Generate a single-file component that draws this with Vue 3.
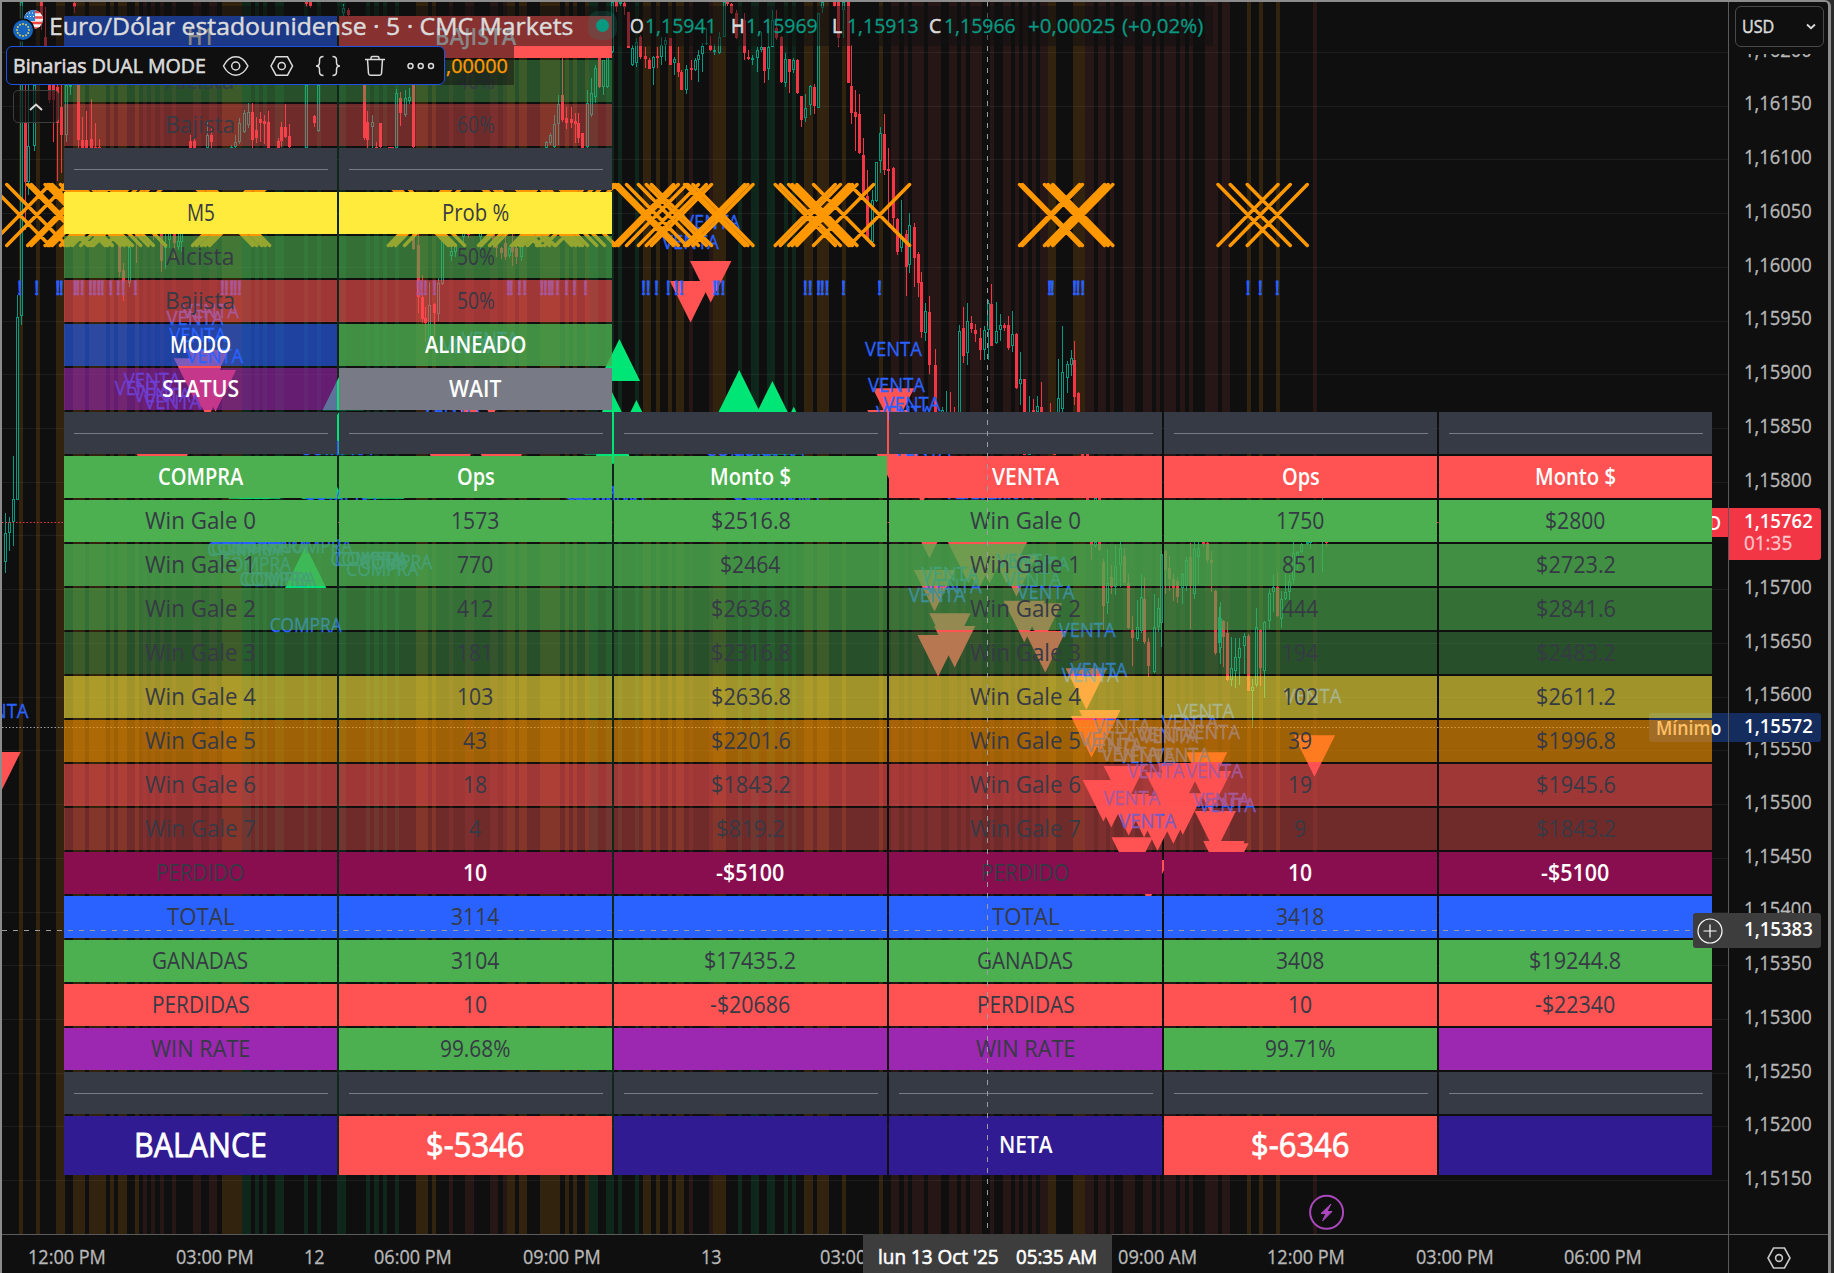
<script setup>
const ADV = {
  ' ': 301, '!': 367, $: 524, '%': 600, "'": 160, '(': 367, ')': 367, '+': 524, ',': 367, '-': 367, '.': 367, '/': 524, ':': 367, '·': 367,
  A: 590, B: 566, C: 598, D: 613, E: 536, F: 525, G: 676, H: 654, I: 278, J: 477, K: 576, L: 506, M: 709, N: 638, O: 674, P: 558, Q: 676,
  R: 582, S: 481, T: 581, U: 648, V: 587, W: 852, X: 557, Y: 570, Z: 550,
  a: 525, b: 557, c: 495, d: 557, e: 545, f: 370, g: 502, h: 546, i: 285, j: 367, k: 504, l: 295, m: 830, n: 546, o: 537, ó: 537, í: 285,
  p: 557, q: 557, r: 389, s: 405, t: 396, u: 546, v: 490, w: 744, x: 501, y: 493, z: 475
}
const textWidth = (t, size) => [...t].reduce((w, c) => w + (ADV[c] ?? 524), 0) * size / 1000

// Condenses a label to the advance widths of the chart typeface.
const vFit = {
  mounted(el, { value }) {
    const natural = el.offsetWidth
    const t = el.textContent
    if (!natural || !t) return
    const target = value || textWidth(t, parseFloat(getComputedStyle(el).fontSize))
    el.style.transformOrigin = '0 50%'
    el.style.transform = `scaleX(${target / natural})`
    el.style.marginRight = `${target - natural}px`
  }
}

const KX = 2.529
const KY = 3
const at = (ox, oy) => (x, y = 0) => [ox + x / KX, oy + y / KY]

/* background stripes: [x, width, tone] */
const stripeData = [
  [0, {
    o: '48-58 91-101 142-164 185-215 225-268 278-288 298-321 341-352 561-612 1052-1082 1093-1103 1282-1302 1313-1333 1366-1416 1429-1439 1449-1459 1479-1490',
    r: '362-372 382-392 405-415 435-445 488-508 529-549 1136-1146 1176-1199 1239-1259 1272-1282',
    g: '612-635 645-655 665-675 695-718 769-779 802-812 852-875 926-936 946-959 969-979 999-1009 1490-1512 1533-1552'
  }],
  [600, {
    g: '15-35 46-56 89-99 349-359 382-402 422-443 465-475 486-496',
    o: '109-129 142-152 172-182 192-212 286-319 516-539 549-579 612-622 706-716 1133-1153 1196-1227',
    r: '225-235 276-286 736-756 769-779 789-819 830-862 883-903 913-926 936-966 986-996 1019-1039 1050-1060 1070-1083 1093-1103 1113-1133 1227-1249 1259-1280 1290-1300 1323-1353 1373-1396 1406-1416 1426-1457 1467-1479 1490-1500 1530-1563'
  }],
  [1214, { o: '83-94 114-124 157-167', r: '20-40 250-260' }]
]
const tone = { o: '#32230f', r: '#271616', g: '#0f261a' }
const stripes = stripeData.flatMap(([ox, sets]) =>
  Object.entries(sets).flatMap(([k, s]) => s.split(' ').map(p => {
    const [a, b] = p.split('-').map(v => Math.round(ox + v / KX))
    return { x: a, w: b - a, fill: tone[k] }
  })))

const gridLines = Array.from({ length: 22 }, (_, i) => Math.round(52 + i * 53.72))

/* candles: x, body top, body bottom, high, low (u = up, d = down) */
const candleData = [
  [0, 0, `u52 6 948 6 975;d63 370 545 250 690;u72 437 545 250 585;u85 255 437 250 452;d104 6 60 6 90;d115 110 140 20 150;d125 255 300 250 310;
  d135 255 300 250 425;d145 260 370 250 542;d155 320 405 250 520;u168 255 405 250 425;u178 255 262 250 285;d188 10 20 6 40;d198 255 420 255 443;d208 420 443 350 443;
  d218 420 443 333 443;d229 417 443 297 443;d240 440 443 370 443;d251 440 443 417 443;d480 423 443 405 443;d491 423 443 415 443;u523 405 443 365 443;d533 405 425 380 443;
  u585 440 443 435 443;u595 425 440 405 443;u605 370 425 355 432;u616 340 395 330 400;u627 337 375 310 385;d638 337 420 310 443;d648 390 415 350 430;d658 358 370 335 425;
  d668 363 373 345 433;d678 367 443 333 443;d702 423 443 415 443;d711 380 423 365 440;d722 380 410 312 415;d732 408 440 373 443;u773 255 443 255 443;d775 6 12 6 20;d785 6 18 6 25;
  d795 348 370 345 380;u805 255 392 255 395;u868 24 40 12 60;d880 30 46 25 50;d920 255 415 255 420;d929 365 420 333 443;u940 367 380 345 443;d950 440 443 425 443;d962 370 440 368 443;
  d985 440 443 440 443;d992 440 443 440 443;u1002 280 443 268 443;d1012 293 338 275 378;u1023 293 345 270 350;u1035 290 302 265 312;d1045 255 440 255 443;
  u1380 425 443 422 443;u1390 405 430 400 435;u1400 373 440 345 443;u1412 313 373 285 435;d1422 285 360 160 365;d1432 353 368 320 388;d1443 358 368 320 385;d1453 363 373 340 430;
  d1463 370 413 338 430;d1473 400 443 398 443;u1484 308 440 270 443;u1495 280 345 235 350;u1505 205 290 195 308;d1515 145 260 145 265;u1525 180 262 190 285;u1536 150 262 145 264`],
  [0, 180, `u42 410 960 345 960;d302 160 275 160 290;d312 270 310 250 362;u325 200 310 190 320;d345 160 170 160 248;d387 160 163 160 180;d408 160 243 160 275;u418 195 205 160 268;
  u428 160 180 160 205;d439 160 190 160 240;u449 183 200 160 210;u459 160 185 160 215;d1045 160 208 160 210;d1056 195 350 160 400;d1066 350 418 285 430;d1076 413 430 380 487;
  u1086 375 478 307 480;d1097 372 398 370 467;u1108 308 403 295 422;u1118 160 313 160 315;u1140 213 228 200 243;u1150 195 215 190 232;u1172 160 172 160 190;d1183 160 165 160 175;
  u1213 160 170 160 208;d1248 160 195 160 205;d1255 190 205 170 232;d1266 205 220 200 237;d1276 190 230 165 240;u1286 205 228 195 235;d1296 195 217 160 257;d1306 205 230 190 253;u1317 198 230 180 243`],
  [0, 440, 'u32 178 247 48 318;u22 247 280 230 332;u12 280 365 218 400'],
  [600, 0, `u30 6 155 6 160;d40 6 20 6 35;u50 6 12 6 18;d61 10 20 6 45;d72 35 143 35 143;u82 145 195 135 198;u92 125 188 115 200;d102 110 170 105 178;d113 168 178 140 205;d123 180 207 175 208;
  u133 170 205 168 255;d145 168 173 140 205;u155 135 170 110 195;u165 120 135 110 182;d176 113 195 113 195;u186 178 188 170 225;d196 188 217 140 230;d206 215 270 210 270;u218 208 270 195 282;
  d229 205 210 180 240;u239 180 210 175 212;u249 165 180 150 245;u259 138 163 130 215;u269 128 132 85 135;d279 135 150 108 152;u289 150 157 132 165;u302 110 160 95 162;u313 6 110 6 110;d322 6 12 6 18;
  d332 12 40 10 42;d343 40 115 30 117;d363 60 160 40 180;d375 170 178 150 180;u385 175 180 165 195;u396 150 175 140 217;u406 140 150 95 155;d416 142 212 140 248;u426 140 207 75 240;u436 60 140 30 142;
  d446 85 115 30 120;d459 110 245 108 248;u469 178 248 160 262;d479 178 215 177 278;u489 180 210 175 220;d499 180 280 178 282;d509 288 360 288 380;u519 323 355 282 365;u532 258 315 255 345;
  d542 262 317 252 342;u552 40 323 38 325;u562 6 25 6 40;d593 6 18 6 22;d603 6 115 6 140;u615 6 30 6 115;d626 6 248 6 248;d636 258 338 135 372;d646 337 350 270 453;d656 343 460 282 462;d666 465 585 415 600;
  d676 588 720 510 720;u688 600 725 570 735;u699 487 603 485 605;u709 400 483 380 518;d719 403 510 342 525;d729 508 513 445 680;d740 503 655 500 695;d750 658 755 655 765;u760 715 745 600 755`],
  [600, 180, `d773 163 262 150 348;u782 135 255 100 280;d793 140 233 130 320;d803 222 310 215 350;d813 305 455 275 475;u823 393 458 370 482;d833 397 555 348 582;d846 555 710 507 710;u866 690 710 680 710;
  u876 700 710 632 710;d886 700 710 636 710;d896 700 710 680 710;u907 453 710 435 710;d917 443 527 380 548;u929 422 520 368 555;d939 430 447 408 458;d949 450 463 433 485;d960 473 510 443 540;
  u970 450 510 437 540;u980 370 450 360 540;d990 372 497 312 498;u1002 453 490 365 492;u1012 435 450 402 483;d1022 436 443 430 453;d1033 435 503 408 510;u1043 463 497 392 515;d1053 462 623 460 627;
  u1063 598 612 517 675;d1073 598 825 598 825;u1086 820 825 648 825;d1096 690 710 658 710;u1106 678 696 648 705;d1116 682 700 605 700;d1137 696 710 668 710;d1147 820 825 820 825;
  u1159 655 700 537 700;u1169 577 688 438 700;u1180 552 595 543 640;u1190 533 555 510 588;d1200 540 650 483 675;d1210 638 780 635 780;d1220 822 830 822 830;d1231 822 965 822 970;u1253 955 965 955 965;d1263 950 965 950 965`],
  [600, 480, `d1243 180 195 180 240;u1253 186 197 180 205;d1263 180 210 180 212;d1273 247 377 237 450;u1283 308 370 207 403;d1293 292 320 255 342;u1303 258 320 195 345;u1316 205 255 180 320;
  d1326 227 310 205 315;d1336 310 443 282 447;d1346 450 473 407 558;u1357 440 478 360 483;u1367 350 453 282 460;d1377 358 487 290 493;d1387 487 557 475 590;u1400 440 577 342 580;u1410 383 440 355 457;
  u1420 222 430 210 502;d1430 213 270 210 342;d1440 265 298 228 332;d1450 298 325 282 362;d1460 303 350 292 370;u1473 283 325 280 372;u1483 240 318 230 333;d1493 232 318 190 447;u1503 208 343 185 358;
  u1513 205 230 172 313;d1524 186 192 180 200;d1534 190 240 182 250;d1544 240 250 213 335;d1555 332 518 330 525;u1565 410 490 380 520`],
  [1214, 480, `u14 413 505 367 552;d24 422 470 420 560;d34 460 600 427 603;u44 563 600 470 617;u54 532 573 475 623;u64 505 533 475 615;u77 468 498 460 583;d87 468 632 462 633;u97 620 633 597 740;
  u107 440 615 385 622;d117 450 563 447 617;u127 425 572 423 653;u138 340 422 327 447;u148 322 335 285 395;d160 320 408 277 410;u170 358 417 332 443;u180 335 358 280 360;u190 303 335 285 365;
  u201 220 300 186 312;u211 215 255 213 270;u221 192 217 188 220;u234 186 192 183 195;u244 184 186 180 208;u274 60 65 50 275;d284 180 190 180 197`]
]
const candles = candleData.flatMap(([ox, oy, s]) => s.split(';').map(c => {
  const t = c.trim()
  const [x, a, b, h, l] = t.slice(1).split(' ').map(Number)
  const px = Math.round(ox + x / KX)
  return { up: t[0] === 'u', x: px, top: oy + a / KY, h: Math.max(1, (b - a) / KY), hi: oy + h / KY, lo: oy + l / KY }
}))

/* downward and upward arrows: centre x, top y */
const downData = [
  [0, 180, '492,535 527,510 508,560 545,570 525,590 398,822 423,822 1139,822 1268,822 1187,620 1243,590'],
  [600, 180, '280,243 229,303 742,625 728,690 729,733 752,822 774,830 812,840 815,845'],
  [600, 480, `833,110 932,186 950,190 985,186 1028,186 960,197 846,270 885,400 897,438 855,465 1053,225 1073,362 1116,370 1126,453 1230,565 1264,690 1243,708
   1326,858 1273,900 1293,918 1337,942 1376,948 1410,988 1450,967 1474,940 1431,877 1475,850 1463,850 1544,873 1534,817 1346,1072 1556,993 1578,1083 1588,1090 1387,1140`],
  [1214, 480, '254,766'],
  [0, 440, '0,936']
]
const upData = [
  [600, 180, '49,477 352,570 436,603 92,660 490,680 30,635 10,697 32,725 425,697 460,697'],
  [0, 180, '868,565 856,697 1531,697'],
  [0, 440, '630,50 657,50 815,50 970,50 735,180 711,180 773,318']
]
const poly = (data, dir) => data.flatMap(([ox, oy, s]) => s.trim().split(/\s+/).map(p => {
  const [x, y] = p.split(',').map(Number)
  const [cx, cy] = at(ox, oy)(x, y)
  return dir > 0
    ? `${cx - 20.7},${cy} ${cx + 20.7},${cy} ${cx},${cy + 41.5}`
    : `${cx - 20.7},${cy + 42} ${cx + 20.7},${cy + 42} ${cx},${cy}`
}))
const downs = poly(downData, 1)
const ups = poly(upData, -1)

/* signal captions: centre x, baseline */
const ventaData = [
  [600, 180, '282,147 229,207 742,527 750,637 789,693 770,720 814,827 941,958 980,958 1025,958'],
  [0, 180, '532,414 493,434 500,487 543,548 385,622 362,645 410,665 437,687 1240,497 1190,520 1140,697'],
  [600, 480, '885,302 893,340 853,365 1075,265 1115,273 1095,318 1128,357 1232,470 1262,592 1240,607 1532,715 1321,760 1492,747 1547,777 1430,782 1441,790 1286,799 1300,817 1340,843 1383,850 1471,845 1406,895 1554,895 1345,975 1385,1043 1572,980 1587,995'],
  [1214, 480, '250,668'],
  [0, 440, '0,835']
]
const compraData = [
  [0, 440, '615,347 625,345 640,340 690,340 800,338 645,392 697,437 708,437 927,377 940,377 1002,388 967,407 773,577 860,180 850,45 1520,180 620,312'],
  [600, 180, '358,827 425,827 425,960 463,960 20,960']
]
const caps = (data, text) => data.flatMap(([ox, oy, s]) => s.split(' ').map(p => {
  const [x, y] = at(ox, oy)(...p.split(',').map(Number))
  return { x, y, text, len: textWidth(text, 19.4) }
}))
const captions = [...caps(ventaData, 'VENTA'), ...caps(compraData, 'COMPRA')]

const signalData = [
  [0, '50 93 146 155 190 197 208 229 239 250 259 280 299 312 343 563 573 586 595 606 1058 1066 1076 1099 1286 1293 1314 1327 1370 1380 1390 1397 1410 1433 1453 1481'],
  [600, '110 122 143 173 193 206 290 298 311 519 532 553 562 574 616 707 1137 1144 1200 1209 1221'],
  [1214, '86 117 160']
]
const signals = signalData.flatMap(([ox, s]) => s.split(' ').map(v => ox + v / KX))
const crossPath = signals.map(x => `M${x - 30} 184.500L${x + 30} 245.500M${x + 30} 184.500L${x - 30} 245.500`).join('')

/* table */
const G = '76,175,80', R = '255,82,82', Y = '255,235,59', O = '255,152,0', B = '41,98,255', P = '156,39,176'
const c = (t, rgb, a = 1, cls = '') => ({ t, bg: `rgba(${rgb},${a})`, cls })
const sep = n => Array.from({ length: n }, () => ({ sep: true, bg: '#363a45' }))
const six = (l, v, rgb, a) => [l, v[0], v[1], l, v[2], v[3]].map(t => c(t, rgb, a))
const M = '136,14,79', I = '49,27,146'
const rows = [
  [c('H1', B, 1, 'w'), c('BAJISTA', R, 1, 'w')],
  [c('Alcista', G, 0.4), c('40%', G, 0.4)],
  [c('Bajista', R, 0.4), c('60%', R, 0.4)],
  sep(2),
  [c('M5', Y), c('Prob %', Y)],
  [c('Alcista', G, 0.6), c('50%', G, 0.6)],
  [c('Bajista', R, 0.6), c('50%', R, 0.6)],
  [c('MODO', B, 0.6, 'w'), c('ALINEADO', G, 0.8, 'w')],
  [c('STATUS', P, 0.6, 'w'), c('WAIT', '120,123,134', 1, 'w')],
  sep(6),
  [c('COMPRA', G, 1, 'w'), c('Ops', G, 1, 'w'), c('Monto $', G, 1, 'w'), c('VENTA', R, 1, 'w'), c('Ops', R, 1, 'w'), c('Monto $', R, 1, 'w')],
  six('Win Gale 0', ['1573', '$2516.8', '1750', '$2800'], G, 1),
  six('Win Gale 1', ['770', '$2464', '851', '$2723.2'], G, 0.8),
  six('Win Gale 2', ['412', '$2636.8', '444', '$2841.6'], G, 0.6),
  six('Win Gale 3', ['181', '$2316.8', '194', '$2483.2'], G, 0.4),
  six('Win Gale 4', ['103', '$2636.8', '102', '$2611.2'], Y, 0.6),
  six('Win Gale 5', ['43', '$2201.6', '39', '$1996.8'], O, 0.6),
  six('Win Gale 6', ['18', '$1843.2', '19', '$1945.6'], R, 0.6),
  six('Win Gale 7', ['4', '$819.2', '9', '$1843.2'], R, 0.4),
  [c('PERDIDO', M), c('10', M, 1, 'w'), c('-$5100', M, 1, 'w'), c('PERDIDO', M), c('10', M, 1, 'w'), c('-$5100', M, 1, 'w')],
  six('TOTAL', ['3114', '', '3418', ''], B, 1),
  six('GANADAS', ['3104', '$17435.2', '3408', '$19244.8'], G, 1),
  six('PERDIDAS', ['10', '-$20686', '10', '-$22340'], R, 1),
  [c('WIN RATE', P), c('99.68%', G), c('', P), c('WIN RATE', P), c('99.71%', G), c('', P)],
  sep(6),
  [c('BALANCE', I, 1, 'w big'), c('$-5346', R, 1, 'w big'), c('', I), c('NETA', I, 1, 'w'), c('$-6346', R, 1, 'w big'), c('', I)]
]

const prices = Array.from({ length: 22 }, (_, i) => '1,' + (16200 - i * 50))
const ohlc = [['O', '1,15941', 630], ['H', '1,15969', 731], ['L', '1,15913', 832], ['C', '1,15966', 929]]
const times = [
  ['12:00 PM', 66.5], ['03:00 PM', 214.6], ['12', 314], ['06:00 PM', 413], ['09:00 PM', 562], ['13', 711],
  ['03:00 AM', 859], ['09:00 AM', 1157], ['12:00 PM', 1306], ['03:00 PM', 1454.6], ['06:00 PM', 1603]
]
const stars = Array.from({ length: 12 }, (_, i) => [23 + 6 * Math.sin(i * Math.PI / 6), 31 - 6 * Math.cos(i * Math.PI / 6)])
</script>

<template>
  <div class="window">
    <main class="plot">
      <svg class="canvas" width="1728" height="1234" viewBox="0 0 1728 1234">
        <g shape-rendering="crispEdges">
          <rect v-for="(s, i) in stripes" :key="'s' + i" :x="s.x" y="2" :width="s.w" height="1232" :fill="s.fill" />
          <rect v-for="y in gridLines" :key="'g' + y" x="2" :y="y" width="1726" height="1" fill="#fff" fill-opacity=".06" />
          <g v-for="(k, i) in candles" :key="'c' + i">
            <template v-if="k.up">
              <rect :x="k.x" :y="k.hi" width="1" :height="Math.max(0, k.top - k.hi)" fill="#089981" />
              <rect :x="k.x" :y="k.top + k.h" width="1" :height="Math.max(0, k.lo - k.top - k.h)" fill="#089981" />
              <rect :x="k.x - 0.5" :y="k.top + 0.5" width="2" :height="Math.max(0.5, k.h - 1)" fill="none" stroke="#089981" />
            </template>
            <template v-else>
              <rect :x="k.x" :y="k.hi" width="1" :height="k.lo - k.hi" fill="#f23645" />
              <rect :x="k.x - 1" :y="k.top" width="3" :height="k.h" fill="#f23645" />
            </template>
          </g>
        </g>
        <polygon v-for="(p, i) in downs" :key="'d' + i" :points="p" fill="#ff5252" />
        <polygon v-for="(p, i) in ups" :key="'u' + i" :points="p" fill="#00e676" />
        <g class="caption">
          <text v-for="(t, i) in captions" :key="'t' + i" :x="t.x" :y="t.y" :textLength="t.len" lengthAdjust="spacingAndGlyphs">{{ t.text }}</text>
          <text v-for="(x, i) in signals" :key="'e' + i" :x="x" y="294.500" class="mark">!</text>
        </g>
        <path :d="crossPath" stroke="#ff9800" stroke-width="3.500" stroke-linecap="round" fill="none" />
        <path d="M2 522.5H1728" stroke="#f23645" stroke-dasharray="1.5 2" />
        <path d="M2 727.5H1728" stroke="#a0a0a0" stroke-dasharray="1.5 2" />
        <g fill="none" stroke="#ab47bc" stroke-width="2">
          <circle cx="1326.6" cy="1212.3" r="16.5" fill="#0f0f0f" />
          <path d="M1331 1204l-10 9.500h5l-3.500 7.500 9.500-9.500h-5z" fill="#ab47bc" stroke-width="1" stroke-linejoin="round" />
        </g>
      </svg>

      <div class="tag last"><span v-fit="0">EURUSD</span></div>
      <div class="tag low"><span v-fit="65">Mínimo</span></div>

      <div class="board">
        <div v-for="(r, i) in rows" :key="i" class="row" :class="{ tall: i === rows.length - 1 }">
          <div v-for="(cell, j) in r" :key="j" class="cell" :class="cell.cls" :style="{ background: cell.bg }">
            <i v-if="cell.sep" class="rule"></i>
            <span v-else v-fit="0">{{ cell.t }}</span>
          </div>
        </div>
      </div>

      <svg class="canvas" width="1728" height="1234" viewBox="0 0 1728 1234">
        <path d="M987.500 2V1234M2 930.500H1694" stroke="#9c9c9c" stroke-dasharray="5 6" />
      </svg>

      <div class="veil one"></div>
      <div class="veil two"></div>
      <header class="legend">
        <svg width="62" height="60" viewBox="0 0 62 60" class="flags">
          <defs><clipPath id="us"><circle cx="33.500" cy="20.500" r="9.500" /></clipPath></defs>
          <g clip-path="url(#us)">
            <rect x="23" y="10" width="22" height="22" fill="#f0f0f0" />
            <path d="M23 13h22M23 18.500h22M23 24h22M23 29.500h22" stroke="#ef4444" stroke-width="2.700" />
            <rect x="23" y="10" width="12" height="12" fill="#2f7fd4" />
            <path d="M26 14h8M27 17.500h8" stroke="#fff" stroke-width="1" stroke-dasharray="1 2" />
          </g>
          <circle cx="23" cy="31" r="11.500" fill="#0f0f0f" />
          <circle cx="23" cy="31" r="10" fill="#1565c0" />
          <circle v-for="(s, i) in stars" :key="i" :cx="s[0]" :cy="s[1]" r=".95" fill="#e8d44d" />
        </svg>
        <span v-fit="524" class="title">Euro/Dólar estadounidense · 5 · CMC Markets</span>
        <i class="status"><b></b></i>
        <span v-for="o in ohlc" :key="o[0]" class="pair" :style="{ left: o[2] + 'px' }"><span v-fit="0" class="key">{{ o[0] }}</span><em v-fit="0">{{ o[1] }}</em></span>
        <span class="pair" :style="{ left: '1028px' }"><em v-fit="87">+0,00025</em></span>
        <span class="pair" :style="{ left: '1122px' }"><em v-fit="81">(+0,02%)</em></span>
      </header>
      <span class="value"><span v-fit="62">,00000</span></span>

      <div class="toolbar">
        <span v-fit="193">Binarias DUAL MODE</span>
        <svg width="210" height="34" viewBox="216 49 210 34" fill="none" stroke="#dbdbdb" stroke-width="1.500">
          <path d="M223.500 66c3-6 7.500-9.200 12.200-9.200s9.200 3.200 12.200 9.200c-3 6-7.500 9.200-12.200 9.200s-9.200-3.200-12.200-9.200z" />
          <circle cx="235.700" cy="66" r="4" />
          <path d="M276 56.800h11.500l5 9.200-5 9.200H276l-5-9.200z" /><circle cx="281.700" cy="66" r="3.600" />
          <path d="M323.500 56.500c-3 0-4 1-4 3.500v2.500c0 2-1 3.500-3.500 3.500 2.500 0 3.500 1.500 3.500 3.500V72c0 2.500 1 3.500 4 3.500M332.500 56.500c3 0 4 1 4 3.500v2.500c0 2 1 3.500 3.500 3.500-2.500 0-3.500 1.500-3.500 3.500V72c0 2.500-1 3.500-4 3.500" />
          <path d="M365 59.500h20M371 59.500v-1.500q0-1.500 1.500-1.500h5q1.500 0 1.500 1.500v1.500M367.500 59.500l1 14q.2 1.800 2 1.800h9q1.800 0 2-1.800l1-14" />
          <circle cx="410.500" cy="66" r="2.500" /><circle cx="420.700" cy="66" r="2.500" />
        </svg>
        <svg class="more" width="10" height="34" viewBox="426 49 10 34" fill="none" stroke="#dbdbdb" stroke-width="1.500"><circle cx="431" cy="66" r="2.500" /></svg>
      </div>
      <div class="collapse">
        <svg width="16" height="10" viewBox="0 0 16 10"><path d="M2 8l6-5.500L14 8" fill="none" stroke="#dbdbdb" stroke-width="2" /></svg>
      </div>
    </main>

    <aside class="prices">
      <div v-for="p in prices" :key="p" class="price"><span v-fit="0">{{ p }}</span></div>
      <div class="cover">
        <div class="currency">
          <span v-fit="0">USD</span>
          <svg width="10" height="7" viewBox="0 0 10 7"><path d="M1 1.500l4 3.700 4-3.700" fill="none" stroke="#dbdbdb" stroke-width="1.800" /></svg>
        </div>
      </div>
      <div class="badge red"><span v-fit="69">1,15762</span><small v-fit="0">01:35</small></div>
      <div class="badge blue"><span v-fit="69">1,15572</span></div>
      <div class="badge gray">
        <svg width="28" height="28" viewBox="0 0 28 28" fill="none" stroke="#fff" stroke-width="1.200"><circle cx="14" cy="14" r="12" /><path d="M14 7.500v13M7.500 14h13" /></svg>
        <span v-fit="69">1,15383</span>
      </div>
    </aside>

    <footer class="times">
      <span v-for="(t, i) in times" :key="i" class="time" :style="{ left: t[1] + 'px' }"><span v-fit="0">{{ t[0] }}</span></span>
      <div class="stamp"><span v-fit="121">lun 13 Oct '25</span><span v-fit="81">05:35 AM</span></div>
    </footer>
    <div class="corner">
      <svg width="26" height="24" viewBox="0 0 26 24" fill="none" stroke="#c8c8c8" stroke-width="1.600"><path d="M7.500 2h11l5.500 10-5.500 10h-11L2 12z" /><circle cx="13" cy="12" r="3.400" /></svg>
    </div>
    <div class="frame"></div>
  </div>
</template>

<style>
body { background: #2b2b2b; overflow: hidden; }
</style>

<style scoped>
.window { position: relative; display: grid; grid-template: 1234px 39px / 1728px 106px; width: 1834px; height: 1273px; overflow: hidden; background: #0f0f0f; font-family: "Open Sans", "Noto Sans", sans-serif; font-size: 19.4px; line-height: 1; color: #dbdbdb; white-space: nowrap; }
.window span, .window em, .window small { display: inline-block; white-space: pre; }
.plot { position: relative; overflow: hidden; }
.canvas { position: absolute; inset: 0; }
.caption { font-size: 19.400px; fill: #2962ff; text-anchor: middle; stroke: #2962ff; stroke-width: .3px; }
.caption .mark { stroke-width: .9px; }

.board { position: absolute; left: 64px; top: 16px; display: flex; flex-direction: column; gap: 2px; }
.row { display: flex; gap: 2px; height: 42px; }
.row.tall { height: 59px; }
.cell { width: 273px; display: flex; align-items: center; justify-content: center; font-size: 22.900px; color: #363a45; }
.cell.w { color: #fff; font-weight: 600; }
.cell.big { font-size: 33px; padding-bottom: 3px; box-sizing: border-box; font-weight: 400; -webkit-text-stroke: .8px #fff; }
.rule { width: 254px; height: 1px; background: #787b86; margin-top: 1px; }

.tag { position: absolute; right: 0; height: 29px; display: flex; align-items: center; padding: 0 7px; color: #fff; font-weight: 600; }
.tag.last { top: 508px; background: #f23645; }
.tag.low { top: 713px; background: #142c5e; border-radius: 3px 0 0 3px; }

.veil { position: absolute; background: rgba(15, 15, 15, .5); }
.veil.one { left: 12px; top: 6px; width: 1201px; height: 40px; }
.veil.two { left: 12px; top: 46px; width: 502px; height: 39px; }
.legend { position: absolute; left: 0; top: 0; width: 1220px; height: 52px; display: flex; align-items: center; }
.flags { position: absolute; left: 0; top: -1px; }
.title { margin-left: 49px; font-size: 24.500px; -webkit-text-stroke: .45px #dbdbdb; }
.status { position: absolute; left: 588px; top: 11px; width: 29px; height: 29px; border-radius: 10px; background: rgba(34, 150, 130, .18); display: flex; align-items: center; justify-content: center; }
.status b { width: 13px; height: 13px; border-radius: 50%; background: #089981; }
.pair { position: absolute; top: 15px; font-size: 20.500px; }
.pair .key { -webkit-text-stroke: .6px #dbdbdb; }
.pair em { font-style: normal; color: #089981; -webkit-text-stroke: .3px #089981; }
.pair .key + em { position: absolute; left: 15px; top: 0; }
.value { position: absolute; left: 446px; top: 55px; font-size: 20.500px; color: #ff9800; -webkit-text-stroke: .3px #ff9800; }

.toolbar { position: absolute; left: 6px; top: 46px; width: 439px; height: 39px; box-sizing: border-box; border: 1px solid #1e53e5; border-radius: 6px; background: #0f0f0f; display: flex; align-items: center; padding-left: 6px; font-size: 20px; -webkit-text-stroke: .6px #dbdbdb; }
.toolbar svg { margin-left: 10px; flex: none; }
.toolbar svg.more { margin-left: 0; }
.collapse { position: absolute; left: 13px; top: 90px; width: 46px; height: 33px; box-sizing: border-box; border: 1px solid #3d3d3d; border-radius: 5px; background: rgba(15, 15, 15, .65); display: flex; align-items: center; justify-content: center; }

.prices { position: relative; z-index: 1; box-sizing: border-box; border-left: 1px solid #5a5a5a; padding-top: 22.500px; background: #0f0f0f; }
.price { height: 53.740px; display: flex; align-items: center; padding-left: 15px; color: #b8b8b8; -webkit-text-stroke: .3px #b8b8b8; }
.cover { position: absolute; left: 0; top: 0; right: 0; height: 54px; box-sizing: border-box; padding: 6px 0 0 6px; background: #0f0f0f; }
.currency { width: 89px; height: 41px; box-sizing: border-box; border: 1px solid #4a4a4a; border-radius: 6px; display: flex; align-items: center; justify-content: space-between; padding: 0 7px 1px 6px; font-size: 18.500px; -webkit-text-stroke: .5px #dbdbdb; }
.badge { position: absolute; left: 0; width: 92px; box-sizing: border-box; padding-left: 15px; color: #fff; font-weight: 600; border-radius: 0 3px 3px 0; display: flex; align-items: center; }
.badge.red { top: 508px; height: 52px; background: #f23645; flex-direction: column; align-items: flex-start; justify-content: flex-start; padding-top: 3px; gap: 3px; }
.badge small { font-size: 19.400px; font-weight: 400; color: #fcc5ca; -webkit-text-stroke: .3px #fcc5ca; }
.badge.blue { top: 713px; height: 29px; background: #142c5e; padding-bottom: 3px; }
.badge.gray { left: -36px; width: 128px; padding-left: 3px; top: 913px; height: 35px; background: #3d3d3d; border-radius: 3px; gap: 20px; }
.badge.gray span { margin-top: -3px; }

.times { position: relative; border-top: 1px solid #5a5a5a; background: #0f0f0f; color: #b8b8b8; -webkit-text-stroke: .3px #b8b8b8; }
.time { position: absolute; top: 12px; width: 0; display: flex !important; justify-content: center; }
.stamp { position: absolute; left: 863px; top: -1px; width: 249px; height: 40px; box-sizing: border-box; background: #3d3d3d; color: #fff; -webkit-text-stroke: .6px #fff; display: flex; align-items: center; justify-content: space-between; padding: 5px 15px 0; }
.corner { border-top: 1px solid #5a5a5a; border-left: 1px solid #5a5a5a; background: #0f0f0f; padding: 11px 0 0 37px; }
.frame { position: absolute; z-index: 3; left: 0; top: 0; width: 1826px; height: 1300px; border: solid #8c8c8c; border-width: 2px 3px 0 2px; border-radius: 0 6px 0 0; box-shadow: 6px 0 0 6px #2b2b2b; pointer-events: none; }
</style>
